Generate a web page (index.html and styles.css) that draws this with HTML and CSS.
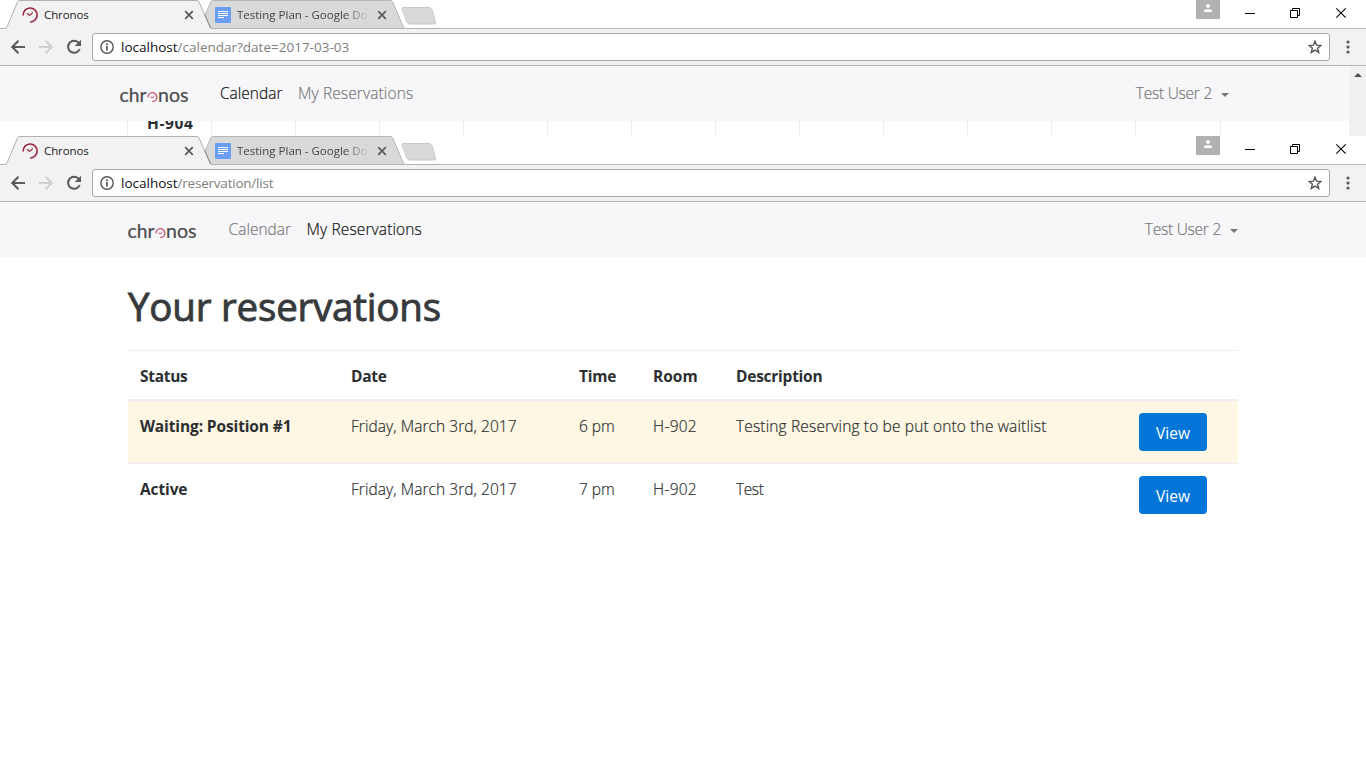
FILE: index.html
```html
<!DOCTYPE html>
<html lang="en">
<head>
<meta charset="utf-8">
<title>Chronos</title>
<link rel="stylesheet" href="styles.css">
</head>
<body>
<svg width="0" height="0" class="defs">
  <defs>
    <symbol id="strip" viewBox="0 0 1366 29">
      <path d="M0 28.5H1366" stroke="#b3b3b3"/>
      <path d="M205 15L211 1.5Q211.500 .5 213 .5H390.500Q392 .5 392.500 1.500L404 28.500H211Z" fill="#d9d9d9" stroke="#b6b6b6"/>
      <path d="M403 7.500H429Q431 7.500 432 9.500L435.500 22Q436 24 434 24H410Q408 24 407 22L402 9Q401.500 7.500 403 7.500Z" fill="#d9d9d9" stroke="#c9c9c9"/>
      <path d="M6 29L17.500 2Q18 .5 20 .5H197Q198.500 .5 199 2L211 29Z" fill="#f2f2f2"/>
      <path d="M5 28.500Q6.500 28.500 7 27L17.500 2Q18 .5 20 .5H197Q198.500 .5 199 2L210 27Q211 28.500 212 28.500" fill="none" stroke="#b0b0b0"/>
      <path d="M205 15L210.500 28" stroke="#8e8e8e"/>
    </symbol>
    <symbol id="clock" viewBox="0 0 16 16">
      <path d="M1.100 8.500A7 7 0 1 1 8 15" fill="none" stroke="#9c2743" stroke-width="1.600"/>
      <path d="M5 6.300L7.500 8.500L10.800 5.500" fill="none" stroke="#a8304b" stroke-width="1.200"/>
    </symbol>
    <symbol id="doc" viewBox="0 0 16 16">
      <rect width="16" height="16" rx="1" fill="#6a9df6"/>
      <path d="M3 4.500H13M3 6.500H13M3 8.500H13M3 10.500H9" stroke="#fff"/>
    </symbol>
    <symbol id="close" viewBox="0 0 10 10"><path d="M1.200 1.200L8.800 8.800M8.800 1.200L1.200 8.800" stroke="#5a5a5a" stroke-width="1.700"/></symbol>
    <symbol id="back" viewBox="0 0 16 16"><path d="M15 8H2.500M8.500 1.700L2.200 8L8.500 14.300" fill="none" stroke="currentColor" stroke-width="2"/></symbol>
    <symbol id="reload" viewBox="0 0 16 16"><path d="M12.900 4.200A6 6 0 1 0 13.700 10" fill="none" stroke="#5a5a5a" stroke-width="2"/><path d="M15 .8V7H8.800Z" fill="#5a5a5a"/></symbol>
    <symbol id="info" viewBox="0 0 14 14"><circle cx="7" cy="7" r="6.200" fill="none" stroke="#555" stroke-width="1.400"/><path d="M7 6V10.500M7 3.300V5" stroke="#444" stroke-width="1.600"/></symbol>
    <symbol id="star" viewBox="0 0 14 14"><path d="M7 1.300L8.600 5.200L12.900 5.500L9.600 8.200L10.700 12.400L7 10.100L3.300 12.400L4.400 8.200L1.100 5.500L5.400 5.200Z" fill="none" stroke="#555" stroke-width="1.400"/></symbol>
    <symbol id="dots" viewBox="0 0 4 14"><circle cx="2" cy="2" r="1.600" fill="#5a5a5a"/><circle cx="2" cy="7" r="1.600" fill="#5a5a5a"/><circle cx="2" cy="12" r="1.600" fill="#5a5a5a"/></symbol>
    <symbol id="person" viewBox="0 0 24 19"><rect width="24" height="19" fill="#b1b1b1"/><circle cx="12" cy="5.900" r="2" fill="#fff"/><path d="M8 12V10.800Q8 9 12 9Q16 9 16 10.800V12Z" fill="#fff"/></symbol>
    <symbol id="winbtns" viewBox="0 0 102 12"><path d="M0 6.500H10" stroke="#000"/><path d="M45.500 3.500H52.500V10.500H45.500ZM47.500 3V1.500H54.500V8.500H53" fill="none" stroke="#000"/><path d="M91.300 1.300L100.700 10.700M100.700 1.300L91.300 10.700" stroke="#000" stroke-width="1.100"/></symbol>
    <symbol id="logo" viewBox="0 0 70 20">
      <g font-family="Lato, sans-serif" font-size="18.500" font-weight="400" fill="#4a4a4c" stroke="#4a4a4c" stroke-width=".2"><text x="-.5" y="16" textLength="27" lengthAdjust="spacingAndGlyphs">chr</text><text x="38" y="16" textLength="30.500" lengthAdjust="spacingAndGlyphs">nos</text></g>
      <path d="M27.900 11.500A4.500 4.500 0 1 1 32.300 15.700" fill="none" stroke="#c2566e" stroke-width="1.300"/>
      <path d="M30.300 10.500L32 12L34.500 9.800" fill="none" stroke="#c2566e"/>
    </symbol>
  </defs>
</svg>

<section class="window first">
  <div class="strip">
    <svg class="strip-bg"><use href="#strip"/></svg>
    <div class="tab one"><svg class="fav"><use href="#clock"/></svg><span class="t tab-a">Chronos</span><svg class="x"><use href="#close"/></svg></div>
    <div class="tab two"><svg class="fav"><use href="#doc"/></svg><span class="t tab-b">Testing Plan - Google Do</span><svg class="x"><use href="#close"/></svg></div>
    <svg class="person"><use href="#person"/></svg><svg class="winbtns"><use href="#winbtns"/></svg>
  </div>
  <div class="toolbar">
    <svg class="ic"><use href="#back"/></svg><svg class="ic fwd"><use href="#back"/></svg><svg class="ic"><use href="#reload"/></svg>
    <div class="omni"><svg class="info"><use href="#info"/></svg><span class="t host">localhost</span><span class="t path cal">/calendar?date=2017-03-03</span><svg class="star"><use href="#star"/></svg></div>
    <svg class="dots"><use href="#dots"/></svg>
  </div>
  <div class="view">
    <div class="page">
      <nav class="nav"><svg class="logo"><use href="#logo"/></svg><a class="t n-cal on">Calendar</a><a class="t n-res">My Reservations</a><a class="user"><span class="t n-user">Test User 2</span><i class="caret"></i></a></nav>
      <div class="grid"><div class="cell"><b class="t room">H-904</b></div><div class="cell"></div><div class="cell"></div><div class="cell"></div><div class="cell"></div><div class="cell"></div><div class="cell"></div><div class="cell"></div><div class="cell"></div><div class="cell"></div><div class="cell"></div><div class="cell"></div><div class="cell last"></div></div>
    </div>
    <div class="scroll"><i></i></div>
  </div>
</section>

<section class="window">
  <div class="strip">
    <svg class="strip-bg"><use href="#strip"/></svg>
    <div class="tab one"><svg class="fav"><use href="#clock"/></svg><span class="t tab-a">Chronos</span><svg class="x"><use href="#close"/></svg></div>
    <div class="tab two"><svg class="fav"><use href="#doc"/></svg><span class="t tab-b">Testing Plan - Google Do</span><svg class="x"><use href="#close"/></svg></div>
    <svg class="person"><use href="#person"/></svg><svg class="winbtns"><use href="#winbtns"/></svg>
  </div>
  <div class="toolbar">
    <svg class="ic"><use href="#back"/></svg><svg class="ic fwd"><use href="#back"/></svg><svg class="ic"><use href="#reload"/></svg>
    <div class="omni"><svg class="info"><use href="#info"/></svg><span class="t host">localhost</span><span class="t path list">/reservation/list</span><svg class="star"><use href="#star"/></svg></div>
    <svg class="dots"><use href="#dots"/></svg>
  </div>
  <nav class="nav wide"><svg class="logo"><use href="#logo"/></svg><a class="t n-cal">Calendar</a><a class="t n-res on">My Reservations</a><a class="user"><span class="t n-user">Test User 2</span><i class="caret"></i></a></nav>
  <main class="main">
    <h1><span class="t title">Your reservations</span></h1>
    <div class="row head"><b class="t h-status">Status</b><b class="t h-date">Date</b><b class="t h-time">Time</b><b class="t h-room">Room</b><b class="t h-desc">Description</b><b></b></div>
    <div class="row waiting"><b class="t waitpos">Waiting: Position #1</b><span class="t date">Friday, March 3rd, 2017</span><span class="t time">6 pm</span><span class="t num">H-902</span><span class="t desc">Testing Reserving to be put onto the waitlist</span><a class="btn">View</a></div>
    <div class="row"><b class="t active">Active</b><span class="t date">Friday, March 3rd, 2017</span><span class="t time">7 pm</span><span class="t num">H-902</span><span class="t test">Test</span><a class="btn">View</a></div>
  </main>
</section>
</body>
</html>
```
FILE: styles.css
```css
* { box-sizing: border-box; }
body { margin: 0; width: 1366px; height: 768px; overflow: hidden; background: #fff; font: 300 15.5px/24px "Open Sans", sans-serif; color: #2c2f31; }
svg { display: block; flex: none; }
.defs { position: absolute; }
.t { white-space: nowrap; }
b { font-weight: 700; }
.window { position: relative; }
.first { height: 136px; overflow: hidden; }
.strip { position: relative; display: flex; height: 29px; }
.strip-bg { position: absolute; left: 0; top: 0; width: 1366px; height: 29px; }
.tab { position: relative; display: flex; align-items: center; height: 29px; padding-top: 1px; font-size: 11.5px; font-weight: 400; color: #222; }
.tab .t { padding-bottom: 1px; }
.tab.one { width: 205px; padding-left: 22px; }
.tab.two { width: 200px; padding-left: 10px; color: #444; }
.tab-a { letter-spacing: -0.1px; }
.fav { width: 16px; height: 16px; margin-right: 6px; }
.tab-b { width: 133px; overflow: hidden; -webkit-mask-image: linear-gradient(90deg, #000 108px, transparent 133px); mask-image: linear-gradient(90deg, #000 108px, transparent 133px); }
.x { width: 10px; height: 10px; position: absolute; left: 184px; top: 10px; }
.two .x { left: 172px; }
.person { width: 24px; height: 19px; margin-left: auto; position: relative; }
.winbtns { width: 102px; height: 12px; margin: 7px 19px 0 25px; position: relative; }
.toolbar { display: flex; align-items: center; height: 37px; padding: 0 16px 0 10px; background: #f2f2f2; border-bottom: 1px solid #b5b5b5; color: #5a5a5a; }
.ic { width: 16px; height: 16px; margin-right: 12px; }
.fwd { transform: scaleX(-1); color: #d0d0d0; }
.omni { display: flex; align-items: center; width: 1238px; height: 28px; margin-left: -2px; background: #fff; border: 1px solid #a9a9a9; border-radius: 3px; font-size: 13.5px; font-weight: 400; }
.info { width: 14px; height: 14px; margin: 0 7px; }
.host { color: #111; }
.path { color: #808080; }
.list { letter-spacing: -0.22px; }
.star { width: 14px; height: 14px; margin: 0 7px 0 auto; }
.dots { width: 4px; height: 14px; margin-left: auto; }
.view { display: flex; }
.page { width: 1349px; }
.nav { display: flex; align-items: center; height: 55px; background: #f7f7f9; padding: 0 120px; color: #77787a; }
.nav .t, .row span { -webkit-text-stroke: 0.2px currentColor; }
.nav .t { padding-bottom: 2px; }
.wide { padding: 0 128px; }
.logo { width: 70px; height: 20px; margin: 5px 30px 0 0; }
.wide .logo { margin-right: 30.6px; }
.n-cal { width: 78px; }
.n-res { letter-spacing: 0.12px; }
.n-user { letter-spacing: -0.24px; }
.nav .on { color: #111; }
.user { display: flex; align-items: center; margin-left: auto; }
.caret { border: 4px solid transparent; border-top-color: currentColor; border-bottom: 0; margin-left: 9px; margin-top: 2px; }
.grid { display: flex; height: 30px; padding-left: 127px; overflow: hidden; }
.cell { width: 84px; border-left: 1px solid #eceeef; }
.cell:first-child { padding-left: 19px; }
.last { width: 86px; border-right: 1px solid #eceeef; }
.room { display: block; margin-top: -10px; letter-spacing: 0.6px; }
.scroll { width: 17px; background: #f1f1f1; padding: 7px 0 0 5px; }
.scroll i { display: block; width: 8px; border: 4px solid transparent; border-bottom-color: #505050; border-top: 0; }
.main { padding: 0 128px; }
h1 { margin: 0; height: 93px; padding-top: 25px; font-size: 38.5px; line-height: 48px; font-weight: 400; letter-spacing: -0.2px; -webkit-text-stroke: 0.9px currentColor; color: #373a3c; }
.row { display: grid; grid-template-columns: 211px 228px 74px 83px 403px 111px; border-top: 1px solid #eceeef; padding: 12px; height: 63px; }
.row .t { padding-top: 1px; }
.head { height: 51px; border-bottom: 2px solid #eceeef; }
.waiting { background: #fdf7e3; border-top: 0; height: 62px; }
.h-status { letter-spacing: -0.3px; }
.h-date, .h-desc { letter-spacing: -0.25px; }
.h-time { letter-spacing: -0.2px; }
.waitpos, .active { letter-spacing: -0.12px; }
.date { letter-spacing: 0.06px; }
.num { letter-spacing: 0.25px; }
.desc { letter-spacing: 0.15px; }
.test { letter-spacing: -0.4px; }
.btn { display: flex; align-items: center; justify-content: center; width: 68px; height: 38px; padding-top: 2px; border-radius: 4px; background: #0275d8; color: #fff; font-weight: 400; }
```
